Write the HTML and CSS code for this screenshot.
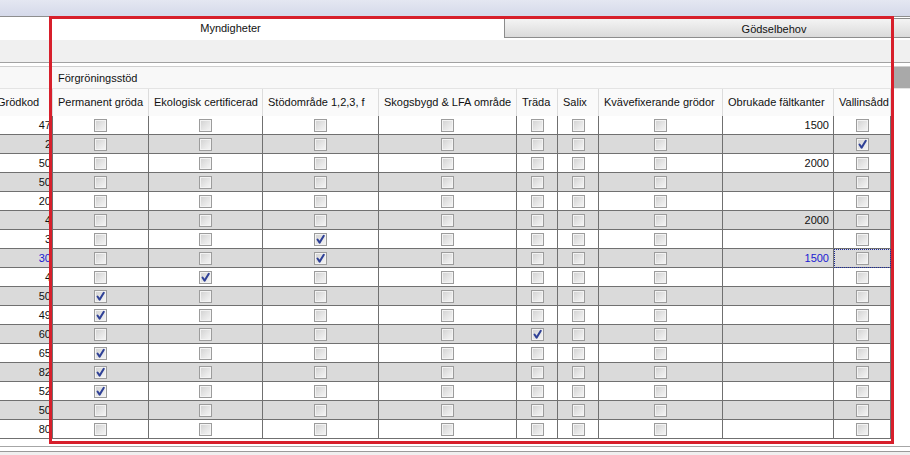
FILE: index.html
```html
<!DOCTYPE html>
<html lang="sv">
<head>
<meta charset="utf-8">
<title>Myndigheter</title>
<link rel="stylesheet" href="styles.css">
</head>
<body>
<div class="titlebar"></div>
<div class="tabstrip">
  <div class="tab-active">Myndigheter</div>
  <div class="tab">Gödselbehov</div>
</div>
<div class="toolbar"></div>
<div class="sep"></div>
<div class="band">
  <div class="band-left"></div>
  <div class="band-title">Förgröningsstöd</div>
  <div class="band-right"></div>
</div>
<div class="row head">
  <div class="c first">Grödkod</div>
  <div class="c">Permanent gröda</div>
  <div class="c">Ekologisk certificerad</div>
  <div class="c">Stödområde 1,2,3, f</div>
  <div class="c">Skogsbygd &amp; LFA område</div>
  <div class="c">Träda</div>
  <div class="c">Salix</div>
  <div class="c">Kvävefixerande grödor</div>
  <div class="c">Obrukade fältkanter</div>
  <div class="c">Vallinsådd</div>
</div>

<div class="row data">
  <div class="c g">47</div>
  <div class="c"><span class="cb"></span></div><div class="c"><span class="cb"></span></div><div class="c"><span class="cb"></span></div><div class="c"><span class="cb"></span></div>
  <div class="c"><span class="cb"></span></div><div class="c"><span class="cb"></span></div><div class="c"><span class="cb"></span></div>
  <div class="c num">1500</div><div class="c"><span class="cb"></span></div>
</div>
<div class="row data alt">
  <div class="c g">2</div>
  <div class="c"><span class="cb"></span></div><div class="c"><span class="cb"></span></div><div class="c"><span class="cb"></span></div><div class="c"><span class="cb"></span></div>
  <div class="c"><span class="cb"></span></div><div class="c"><span class="cb"></span></div><div class="c"><span class="cb"></span></div>
  <div class="c num"></div><div class="c"><span class="cb"><svg viewBox="0 0 11 11"><path d="M2.5 5.5 L4.6 8.6 L8.8 1.8"/></svg></span></div>
</div>
<div class="row data">
  <div class="c g">50</div>
  <div class="c"><span class="cb"></span></div><div class="c"><span class="cb"></span></div><div class="c"><span class="cb"></span></div><div class="c"><span class="cb"></span></div>
  <div class="c"><span class="cb"></span></div><div class="c"><span class="cb"></span></div><div class="c"><span class="cb"></span></div>
  <div class="c num">2000</div><div class="c"><span class="cb"></span></div>
</div>
<div class="row data alt">
  <div class="c g">50</div>
  <div class="c"><span class="cb"></span></div><div class="c"><span class="cb"></span></div><div class="c"><span class="cb"></span></div><div class="c"><span class="cb"></span></div>
  <div class="c"><span class="cb"></span></div><div class="c"><span class="cb"></span></div><div class="c"><span class="cb"></span></div>
  <div class="c num"></div><div class="c"><span class="cb"></span></div>
</div>
<div class="row data">
  <div class="c g">20</div>
  <div class="c"><span class="cb"></span></div><div class="c"><span class="cb"></span></div><div class="c"><span class="cb"></span></div><div class="c"><span class="cb"></span></div>
  <div class="c"><span class="cb"></span></div><div class="c"><span class="cb"></span></div><div class="c"><span class="cb"></span></div>
  <div class="c num"></div><div class="c"><span class="cb"></span></div>
</div>
<div class="row data alt">
  <div class="c g">4</div>
  <div class="c"><span class="cb"></span></div><div class="c"><span class="cb"></span></div><div class="c"><span class="cb"></span></div><div class="c"><span class="cb"></span></div>
  <div class="c"><span class="cb"></span></div><div class="c"><span class="cb"></span></div><div class="c"><span class="cb"></span></div>
  <div class="c num">2000</div><div class="c"><span class="cb"></span></div>
</div>
<div class="row data">
  <div class="c g">3</div>
  <div class="c"><span class="cb"></span></div><div class="c"><span class="cb"></span></div><div class="c"><span class="cb"><svg viewBox="0 0 11 11"><path d="M2.5 5.5 L4.6 8.6 L8.8 1.8"/></svg></span></div><div class="c"><span class="cb"></span></div>
  <div class="c"><span class="cb"></span></div><div class="c"><span class="cb"></span></div><div class="c"><span class="cb"></span></div>
  <div class="c num"></div><div class="c"><span class="cb"></span></div>
</div>
<div class="row data alt sel">
  <div class="c g">30</div>
  <div class="c"><span class="cb"></span></div><div class="c"><span class="cb"></span></div><div class="c"><span class="cb"><svg viewBox="0 0 11 11"><path d="M2.5 5.5 L4.6 8.6 L8.8 1.8"/></svg></span></div><div class="c"><span class="cb"></span></div>
  <div class="c"><span class="cb"></span></div><div class="c"><span class="cb"></span></div><div class="c"><span class="cb"></span></div>
  <div class="c num">1500</div><div class="c focus"><span class="cb"></span></div>
</div>
<div class="row data">
  <div class="c g">4</div>
  <div class="c"><span class="cb"></span></div><div class="c"><span class="cb"><svg viewBox="0 0 11 11"><path d="M2.5 5.5 L4.6 8.6 L8.8 1.8"/></svg></span></div><div class="c"><span class="cb"></span></div><div class="c"><span class="cb"></span></div>
  <div class="c"><span class="cb"></span></div><div class="c"><span class="cb"></span></div><div class="c"><span class="cb"></span></div>
  <div class="c num"></div><div class="c"><span class="cb"></span></div>
</div>
<div class="row data alt">
  <div class="c g">50</div>
  <div class="c"><span class="cb"><svg viewBox="0 0 11 11"><path d="M2.5 5.5 L4.6 8.6 L8.8 1.8"/></svg></span></div><div class="c"><span class="cb"></span></div><div class="c"><span class="cb"></span></div><div class="c"><span class="cb"></span></div>
  <div class="c"><span class="cb"></span></div><div class="c"><span class="cb"></span></div><div class="c"><span class="cb"></span></div>
  <div class="c num"></div><div class="c"><span class="cb"></span></div>
</div>
<div class="row data">
  <div class="c g">49</div>
  <div class="c"><span class="cb"><svg viewBox="0 0 11 11"><path d="M2.5 5.5 L4.6 8.6 L8.8 1.8"/></svg></span></div><div class="c"><span class="cb"></span></div><div class="c"><span class="cb"></span></div><div class="c"><span class="cb"></span></div>
  <div class="c"><span class="cb"></span></div><div class="c"><span class="cb"></span></div><div class="c"><span class="cb"></span></div>
  <div class="c num"></div><div class="c"><span class="cb"></span></div>
</div>
<div class="row data alt">
  <div class="c g">60</div>
  <div class="c"><span class="cb"></span></div><div class="c"><span class="cb"></span></div><div class="c"><span class="cb"></span></div><div class="c"><span class="cb"></span></div>
  <div class="c"><span class="cb"><svg viewBox="0 0 11 11"><path d="M2.5 5.5 L4.6 8.6 L8.8 1.8"/></svg></span></div><div class="c"><span class="cb"></span></div><div class="c"><span class="cb"></span></div>
  <div class="c num"></div><div class="c"><span class="cb"></span></div>
</div>
<div class="row data">
  <div class="c g">65</div>
  <div class="c"><span class="cb"><svg viewBox="0 0 11 11"><path d="M2.5 5.5 L4.6 8.6 L8.8 1.8"/></svg></span></div><div class="c"><span class="cb"></span></div><div class="c"><span class="cb"></span></div><div class="c"><span class="cb"></span></div>
  <div class="c"><span class="cb"></span></div><div class="c"><span class="cb"></span></div><div class="c"><span class="cb"></span></div>
  <div class="c num"></div><div class="c"><span class="cb"></span></div>
</div>
<div class="row data alt">
  <div class="c g">82</div>
  <div class="c"><span class="cb"><svg viewBox="0 0 11 11"><path d="M2.5 5.5 L4.6 8.6 L8.8 1.8"/></svg></span></div><div class="c"><span class="cb"></span></div><div class="c"><span class="cb"></span></div><div class="c"><span class="cb"></span></div>
  <div class="c"><span class="cb"></span></div><div class="c"><span class="cb"></span></div><div class="c"><span class="cb"></span></div>
  <div class="c num"></div><div class="c"><span class="cb"></span></div>
</div>
<div class="row data">
  <div class="c g">52</div>
  <div class="c"><span class="cb"><svg viewBox="0 0 11 11"><path d="M2.5 5.5 L4.6 8.6 L8.8 1.8"/></svg></span></div><div class="c"><span class="cb"></span></div><div class="c"><span class="cb"></span></div><div class="c"><span class="cb"></span></div>
  <div class="c"><span class="cb"></span></div><div class="c"><span class="cb"></span></div><div class="c"><span class="cb"></span></div>
  <div class="c num"></div><div class="c"><span class="cb"></span></div>
</div>
<div class="row data alt">
  <div class="c g">50</div>
  <div class="c"><span class="cb"></span></div><div class="c"><span class="cb"></span></div><div class="c"><span class="cb"></span></div><div class="c"><span class="cb"></span></div>
  <div class="c"><span class="cb"></span></div><div class="c"><span class="cb"></span></div><div class="c"><span class="cb"></span></div>
  <div class="c num"></div><div class="c"><span class="cb"></span></div>
</div>
<div class="row data">
  <div class="c g">80</div>
  <div class="c"><span class="cb"></span></div><div class="c"><span class="cb"></span></div><div class="c"><span class="cb"></span></div><div class="c"><span class="cb"></span></div>
  <div class="c"><span class="cb"></span></div><div class="c"><span class="cb"></span></div><div class="c"><span class="cb"></span></div>
  <div class="c num"></div><div class="c"><span class="cb"></span></div>
</div>

<div class="footer"><div class="footer-line"><div class="footer-bar"></div></div></div>

<div class="highlight"></div>
</body>
</html>
```
FILE: styles.css
```css
* { box-sizing: border-box; }
html, body { margin: 0; padding: 0; }
body {
  width: 910px;
  height: 455px;
  overflow: hidden;
  position: relative;
  background: #fff;
  color: #111;
  font-family: "Liberation Sans", Arial, sans-serif;
  font-size: 11px;
}
.titlebar {
  height: 16px;
  background: linear-gradient(#e4e7f2, #d5d9ea);
}
.tabstrip {
  height: 24px;
  border-top: 1px solid #8e8e8e;
  display: flex;
  overflow: hidden;
  background: #fff;
}
.tab-active {
  flex: 0 0 547px;
  margin-left: -43px;
  text-align: center;
  line-height: 22px;
}
.tab {
  flex: 0 0 540px;
  height: 20px;
  margin-top: 1px;
  border: 1px solid #8c8c8c;
  background: linear-gradient(#f4f4f4, #dadada);
  text-align: center;
  line-height: 19px;
  padding-top: 1px;
}
.toolbar {
  height: 23px;
  background: #f0f0f0;
  border-bottom: 1px solid #a2a2a2;
}
.sep {
  height: 4px;
  border-bottom: 1px solid #cfcfcf;
}
.band {
  display: flex;
  height: 22px;
  border-bottom: 1px solid #e4e4e4;
  background: #f8f8f8;
}
.band-left { flex: 0 0 53px; }
.band-title {
  flex: 0 0 838px;
  padding-left: 5px;
  line-height: 22px;
}
.band-right {
  flex: 1;
  background: #a9a9a9;
}
.row {
  display: grid;
  grid-template-columns: 53px 96px 114px 116px 138px 41px 41px 124px 111px 57px;
  width: 891px;
}
.head { height: 27px; }
.head .c {
  background: #fafafa;
  border-right: 1px solid #dcdcdc;
  padding-left: 5px;
  line-height: 26px;
  white-space: nowrap;
  overflow: hidden;
}
.head .first { padding-left: 0; text-indent: -3px; }
.data .c {
  height: 19px;
  border-right: 1px solid #707070;
  border-bottom: 1px solid #707070;
  display: flex;
  align-items: center;
  justify-content: center;
  white-space: nowrap;
  overflow: hidden;
}
.data.alt .c { background: #dadada; }
.data .g {
  justify-content: flex-end;
  padding-right: 1px;
}
.data .num {
  justify-content: flex-end;
  padding-right: 4px;
}
.sel .g, .sel .num { color: #1a1ad2; }
.data .focus {
  background: #e0e0ea;
  outline: 1px dotted #1a2a9a;
  outline-offset: -1px;
}
.cb {
  position: relative;
  width: 13px;
  height: 13px;
  border: 1px solid #9c9c9c;
  background: linear-gradient(135deg, #d0d0d0 0%, #e6e6e6 55%, #f6f6f6 100%);
  box-shadow: inset 0 0 0 1px #f3f3f3;
  margin-top: 1px;
}
.cb svg {
  position: absolute;
  left: 0;
  top: 0;
  width: 11px;
  height: 11px;
}
.cb svg path {
  fill: none;
  stroke: #2f4197;
  stroke-width: 2;
  stroke-linecap: round;
  stroke-linejoin: round;
}
.footer {
  height: 16px;
  padding-top: 7px;
}
.footer-line {
  height: 9px;
  border-top: 1px solid #a6a6a6;
  padding-top: 4px;
}
.footer-bar {
  height: 4px;
  border-top: 1px solid #9a9a9a;
  background: #f0f0f0;
}
.highlight {
  position: absolute;
  left: 49px;
  top: 16px;
  width: 845px;
  height: 428px;
  border: 3px solid #d71f2b;
  pointer-events: none;
}
```
